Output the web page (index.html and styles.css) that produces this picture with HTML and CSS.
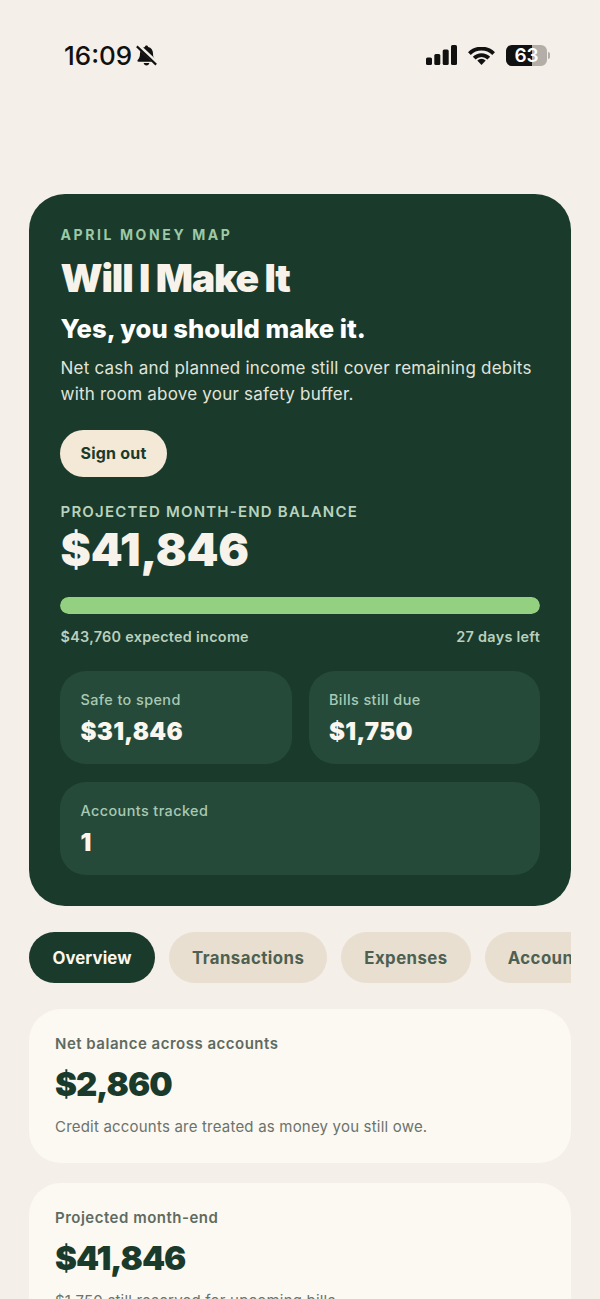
FILE: index.html
```html
<!DOCTYPE html>
<html lang="en">
<head>
    <meta charset="UTF-8">
    <meta name="viewport" content="width=device-width, initial-scale=1.0">
    <title>Will I Make It</title>
    <link rel="stylesheet" href="styles.css">
</head>
<body>
    <div class="status-bar">
        <div class="status-left">
            <span class="clock">16:09</span>
            <svg class="bell" width="21" height="21" viewBox="2 2 20 20">
                <path d="M12 2.5c.9 0 1.5.6 1.6 1.4 2.9.7 4.6 3 4.6 6.1 0 3 .7 4.7 2.2 6.3.5.6.2 1.7-.8 1.7H4.4c-1 0-1.3-1.1-.8-1.7 1.5-1.6 2.2-3.3 2.2-6.3 0-3.1 1.7-5.4 4.6-6.1.1-.8.7-1.4 1.6-1.4z" fill="#111"/>
                <path d="M9.3 19.2h5.4c-.2 1.4-1.3 2.3-2.7 2.3s-2.5-.9-2.7-2.3z" fill="#111"/>
                <path d="M3.6 2.3l18 17" stroke="#f5efe9" stroke-width="4.2"/>
                <path d="M2.8 3.3l18.4 17.4" stroke="#111" stroke-width="2"/>
            </svg>
        </div>
        <div class="status-right">
            <svg width="31" height="20" viewBox="0 0 31 20">
                <rect x="0" y="12.5" width="6" height="7.5" rx="1.5" fill="#111"/>
                <rect x="8.3" y="9" width="6" height="11" rx="1.5" fill="#111"/>
                <rect x="16.7" y="4.5" width="6" height="15.5" rx="1.5" fill="#111"/>
                <rect x="25" y="0" width="6" height="20" rx="1.5" fill="#111"/>
            </svg>
            <svg class="wifi" width="27" height="18" viewBox="0 0 27 18">
                <path d="M1.4 6.6A17 17 0 0 1 25.6 6.6" fill="none" stroke="#111" stroke-width="3.8"/>
                <path d="M6.2 11.2A10.2 10.2 0 0 1 20.8 11.2" fill="none" stroke="#111" stroke-width="3.8"/>
                <path d="M13.5 18l-4.2-4.6a6 6 0 0 1 8.4 0z" fill="#111"/>
            </svg>
            <div class="battery">
                <div class="battery-body">
                    <div class="battery-fill"></div>
                    <span class="battery-text">63</span>
                </div>
                <div class="battery-cap"></div>
            </div>
        </div>
    </div>

    <div class="page">
        <section class="hero">
            <p class="eyebrow">APRIL MONEY MAP</p>
            <h1>Will I Make It</h1>
            <h2>Yes, you should make it.</h2>
            <p class="hero-copy">Net cash and planned income still cover remaining debits with room above your safety buffer.</p>
            <button class="sign-out">Sign out</button>

            <p class="balance-label">PROJECTED MONTH-END BALANCE</p>
            <p class="balance">$41,846</p>
            <div class="progress"><div class="progress-fill" style="width: 100%"></div></div>
            <div class="progress-meta">
                <span>$43,760 expected income</span>
                <span>27 days left</span>
            </div>

            <div class="stat-grid">
                <div class="stat">
                    <p class="stat-label">Safe to spend</p>
                    <p class="stat-value">$31,846</p>
                </div>
                <div class="stat">
                    <p class="stat-label">Bills still due</p>
                    <p class="stat-value">$1,750</p>
                </div>
                <div class="stat stat-wide">
                    <p class="stat-label">Accounts tracked</p>
                    <p class="stat-value">1</p>
                </div>
            </div>
        </section>

        <nav class="tabs">
            <button class="tab tab-active">Overview</button>
            <button class="tab">Transactions</button>
            <button class="tab">Expenses</button>
            <button class="tab">Accounts</button>
        </nav>

        <section class="card">
            <p class="card-label">Net balance across accounts</p>
            <p class="card-value">$2,860</p>
            <p class="card-note">Credit accounts are treated as money you still owe.</p>
        </section>
        <section class="card">
            <p class="card-label">Projected month-end</p>
            <p class="card-value">$41,846</p>
            <p class="card-note">$1,750 still reserved for upcoming bills.</p>
        </section>
    </div>
</body>
</html>
```

FILE: styles.css
```css
html, body {
    height: 100%;
    overflow: hidden;
}
body {
    margin: 0;
    font-family: Inter, "Liberation Sans", sans-serif;
    background-color: #f5efe9;
    color: #1a3a2b;
}
p, h1, h2 {
    margin: 0;
}
button {
    font-family: inherit;
    border: none;
}

/* status bar */
.status-bar {
    display: flex;
    justify-content: space-between;
    align-items: center;
    height: 28px;
    padding: 41px 50px 0 64px;
}
.status-left {
    display: flex;
    align-items: center;
    gap: 4px;
}
.clock {
    font-size: 26px;
    font-weight: 500;
    color: #111;
}
.status-right {
    display: flex;
    align-items: center;
    gap: 11px;
}
.wifi {
    margin-top: 2px;
}
.battery {
    display: flex;
    align-items: center;
    gap: 1px;
}
.battery-body {
    position: relative;
    width: 41px;
    height: 21px;
    border-radius: 6px;
    background-color: #b3aea8;
    overflow: hidden;
}
.battery-fill {
    width: 63%;
    height: 100%;
    background-color: #111;
}
.battery-text {
    position: absolute;
    top: 0;
    left: 0;
    width: 100%;
    text-align: center;
    font-size: 19px;
    line-height: 21px;
    font-weight: 600;
    color: #fff;
}
.battery-cap {
    width: 2px;
    height: 7px;
    border-radius: 0 2px 2px 0;
    background-color: #b3aea8;
}

/* main column */
.page {
    padding: 125px 29px 0;
}
.hero {
    padding: 32px 31px 31px 31.5px;
    border-radius: 36px;
    background-color: #1a3a2b;
    color: #f8f3ea;
}
.eyebrow {
    font-size: 14px;
    line-height: 17px;
    font-weight: 700;
    letter-spacing: 2.6px;
    color: #9cc9a6;
}
h1 {
    margin-top: 11px;
    font-size: 39px;
    line-height: 48px;
    font-weight: 900;
    letter-spacing: -1.2px;
}
h2 {
    margin-top: 11px;
    font-size: 25.6px;
    line-height: 32px;
    font-weight: 800;
    color: #fff;
}
.hero-copy {
    margin-top: 10px;
    font-size: 17px;
    line-height: 26px;
    letter-spacing: .22px;
    color: #e0e5dc;
}
.sign-out {
    display: block;
    margin: 23px 0 0 -.5px;
    padding-bottom: 2px;
    width: 107px;
    height: 47px;
    border-radius: 24px;
    font-size: 16px;
    font-weight: 700;
    letter-spacing: .2px;
    color: #1a3a2b;
    background-color: #f4e8d6;
}
.balance-label {
    margin-top: 26px;
    font-size: 15px;
    line-height: 18px;
    font-weight: 600;
    letter-spacing: 1.2px;
    color: #b9d2bd;
}
.balance {
    margin-top: 3px;
    font-size: 45.6px;
    line-height: 52px;
    font-weight: 900;
    letter-spacing: -.2px;
}
.progress {
    margin: 21px 0 0 -.5px;
    height: 17px;
    border-radius: 9px;
    background-color: #35573f;
    overflow: hidden;
}
.progress-fill {
    height: 100%;
    border-radius: 9px;
    background-color: #93d07f;
}
.progress-meta {
    display: flex;
    justify-content: space-between;
    margin-top: 14px;
    font-size: 14.4px;
    line-height: 18px;
    font-weight: 600;
    letter-spacing: .28px;
    color: #b9d0bd;
}
.stat-grid {
    display: grid;
    grid-template-columns: 1fr 1fr;
    gap: 18px 17px;
    margin: 25px 0 0 -.5px;
}
.stat {
    height: 93px;
    box-sizing: border-box;
    padding: 20px 20px 0 20.5px;
    border-radius: 26px;
    background-color: #264a3a;
}
.stat-wide {
    grid-column: span 2;
}
.stat-label {
    font-size: 14.4px;
    line-height: 18px;
    font-weight: 500;
    letter-spacing: .42px;
    color: #a8c9b3;
}
.stat-value {
    margin-top: 7px;
    font-size: 24px;
    line-height: 32px;
    font-weight: 900;
    letter-spacing: .3px;
    color: #fbf7ef;
}

/* tabs */
.tabs {
    display: flex;
    gap: 14px;
    margin-top: 26px;
    overflow: hidden;
}
.tab {
    flex: none;
    height: 51px;
    padding: 0 23px;
    border-radius: 26px;
    font-size: 16.8px;
    font-weight: 700;
    letter-spacing: .45px;
    color: #4f5f51;
    background-color: #e8dfd0;
}
.tab-active {
    min-width: 126px;
    letter-spacing: .1px;
    color: #fbf7ef;
    background-color: #1a3a2b;
}

/* summary cards */
.card {
    height: 154px;
    box-sizing: border-box;
    margin-top: 26px;
    padding: 26px 26px 0;
    border-radius: 32px;
    background-color: #fcf9f3;
}
.card + .card {
    margin-top: 20px;
}
.card-label {
    font-size: 15px;
    line-height: 18px;
    font-weight: 600;
    letter-spacing: .5px;
    color: #5f6b60;
}
.card-value {
    margin-top: 10px;
    font-size: 33px;
    line-height: 42px;
    font-weight: 900;
    letter-spacing: -1px;
    color: #1a3a2b;
}
.card-note {
    margin-top: 12px;
    font-size: 15px;
    line-height: 20px;
    letter-spacing: .2px;
    color: #6b736b;
}
```
